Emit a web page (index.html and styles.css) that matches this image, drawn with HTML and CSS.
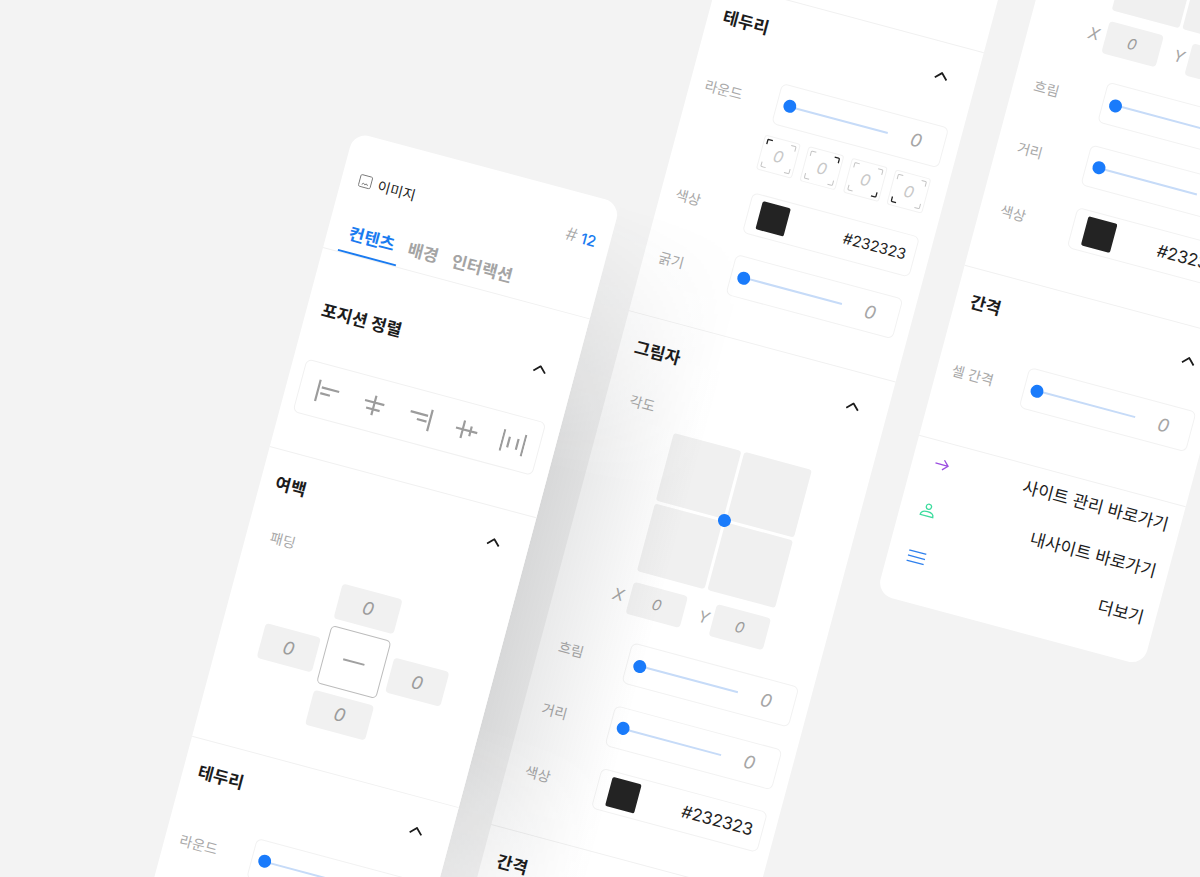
FILE: index.html
```html
<!DOCTYPE html>
<html lang="ko">
<head>
<meta charset="utf-8">
<title>이미지 설정 패널</title>
<link rel="stylesheet" href="styles.css">
</head>
<body>
<main class="stage">

<!-- 첫 번째 패널 -->
<aside class="panel panel-first">
  <header class="panel-head">
    <div class="panel-title-row">
      <div class="widget-name">
        <svg class="icon-image" viewBox="0 0 14 14"><rect x="1" y="1" width="12" height="12" rx="1.5"/><path d="M4 10.5l1.500-1.500 1.500 1.200 1.500-1.200 1.500 1.500"/></svg>
        <span>이미지</span>
      </div>
      <div class="widget-id"><span class="hash">#</span> <span class="num">12</span></div>
    </div>
    <nav class="tabs">
      <span class="tab active">컨텐츠</span>
      <span class="tab">배경</span>
      <span class="tab">인터랙션</span>
    </nav>
  </header>

  <section class="section section-position">
    <div class="section-head"><h2>포지션 정렬</h2><svg class="chevron" viewBox="0 0 14 8"><path d="M1 7l6-6 6 6"/></svg></div>
    <div class="align-box">
      <svg class="align-icon" viewBox="0 0 24 24"><path d="M2 1v22M5 8h18M5 14h10"/></svg>
      <svg class="align-icon" viewBox="0 0 24 24"><path d="M12 2v20M2 9h20M5 16h14"/></svg>
      <svg class="align-icon" viewBox="0 0 24 24"><path d="M22 1v22M1 8h18M9 14h10"/></svg>
      <svg class="align-icon" viewBox="0 0 24 24"><path d="M1 12h22M8 3v18M16 7v10"/></svg>
      <svg class="align-icon" viewBox="0 0 24 24"><path d="M1 1v22M23 1v22M7.500 7v11M16.500 7v11"/></svg>
    </div>
  </section>

  <section class="section section-padding">
    <div class="section-head"><h2>여백</h2><svg class="chevron" viewBox="0 0 14 8"><path d="M1 7l6-6 6 6"/></svg></div>
    <div class="sub-label">패딩</div>
    <div class="padding-grid">
      <div class="pad-cell pad-top">0</div>
      <div class="pad-cell pad-left">0</div>
      <div class="pad-center"><i></i></div>
      <div class="pad-cell pad-right">0</div>
      <div class="pad-cell pad-bottom">0</div>
    </div>
  </section>

  <section class="section section-border">
    <div class="section-head"><h2>테두리</h2><svg class="chevron" viewBox="0 0 14 8"><path d="M1 7l6-6 6 6"/></svg></div>
    <div class="rows">
      <div class="radius-group">
        <div class="row"><span class="label">라운드</span><div class="slider"><div class="track"><i class="knob"></i></div><span class="value">0</span></div></div>
        <div class="corners">
          <div class="corner">0<svg viewBox="0 0 37 36"><path class="on" d="M4 9V5q0-1 1-1h4"/><path d="M28 4h4q1 0 1 1v4M33 27v4q0 1-1 1h-4M9 32H5q-1 0-1-1v-4"/></svg></div>
          <div class="corner">0<svg viewBox="0 0 37 36"><path class="on" d="M28 4h4q1 0 1 1v4"/><path d="M4 9V5q0-1 1-1h4M33 27v4q0 1-1 1h-4M9 32H5q-1 0-1-1v-4"/></svg></div>
          <div class="corner">0<svg viewBox="0 0 37 36"><path class="on" d="M33 27v4q0 1-1 1h-4"/><path d="M4 9V5q0-1 1-1h4M28 4h4q1 0 1 1v4M9 32H5q-1 0-1-1v-4"/></svg></div>
          <div class="corner">0<svg viewBox="0 0 37 36"><path class="on" d="M9 32H5q-1 0-1-1v-4"/><path d="M4 9V5q0-1 1-1h4M28 4h4q1 0 1 1v4M33 27v4q0 1-1 1h-4"/></svg></div>
        </div>
      </div>
      <div class="row"><span class="label">색상</span><div class="color-box"><i class="swatch"></i><span class="hex">#232323</span></div></div>
      <div class="row"><span class="label">굵기</span><div class="slider"><div class="track"><i class="knob"></i></div><span class="value">0</span></div></div>
    </div>
  </section>
</aside>

<!-- 두 번째 패널 -->
<aside class="panel panel-second">
  <section class="section section-padding">
    <div class="section-head"><h2>여백</h2><svg class="chevron" viewBox="0 0 14 8"><path d="M1 7l6-6 6 6"/></svg></div>
    <div class="sub-label">패딩</div>
    <div class="padding-grid">
      <div class="pad-cell pad-top">0</div>
      <div class="pad-cell pad-left">0</div>
      <div class="pad-center"><i></i></div>
      <div class="pad-cell pad-right">0</div>
      <div class="pad-cell pad-bottom">0</div>
    </div>
  </section>

  <section class="section section-border">
    <div class="section-head"><h2>테두리</h2><svg class="chevron" viewBox="0 0 14 8"><path d="M1 7l6-6 6 6"/></svg></div>
    <div class="rows">
      <div class="radius-group">
        <div class="row"><span class="label">라운드</span><div class="slider"><div class="track"><i class="knob"></i></div><span class="value">0</span></div></div>
        <div class="corners">
          <div class="corner">0<svg viewBox="0 0 37 36"><path class="on" d="M4 9V5q0-1 1-1h4"/><path d="M28 4h4q1 0 1 1v4M33 27v4q0 1-1 1h-4M9 32H5q-1 0-1-1v-4"/></svg></div>
          <div class="corner">0<svg viewBox="0 0 37 36"><path class="on" d="M28 4h4q1 0 1 1v4"/><path d="M4 9V5q0-1 1-1h4M33 27v4q0 1-1 1h-4M9 32H5q-1 0-1-1v-4"/></svg></div>
          <div class="corner">0<svg viewBox="0 0 37 36"><path class="on" d="M33 27v4q0 1-1 1h-4"/><path d="M4 9V5q0-1 1-1h4M28 4h4q1 0 1 1v4M9 32H5q-1 0-1-1v-4"/></svg></div>
          <div class="corner">0<svg viewBox="0 0 37 36"><path class="on" d="M9 32H5q-1 0-1-1v-4"/><path d="M4 9V5q0-1 1-1h4M28 4h4q1 0 1 1v4M33 27v4q0 1-1 1h-4"/></svg></div>
        </div>
      </div>
      <div class="row"><span class="label">색상</span><div class="color-box"><i class="swatch"></i><span class="hex">#232323</span></div></div>
      <div class="row"><span class="label">굵기</span><div class="slider"><div class="track"><i class="knob"></i></div><span class="value">0</span></div></div>
    </div>
  </section>

  <section class="section section-shadow">
    <div class="section-head"><h2>그림자</h2><svg class="chevron" viewBox="0 0 14 8"><path d="M1 7l6-6 6 6"/></svg></div>
    <div class="sub-label">각도</div>
    <div class="angle-grid"><i></i><i></i><i></i><i></i><b class="knob"></b></div>
    <div class="xy-row">
      <span class="axis">X</span><div class="xy-cell">0</div>
      <span class="axis axis-y">Y</span><div class="xy-cell">0</div>
    </div>
    <div class="rows">
      <div class="row"><span class="label">흐림</span><div class="slider"><div class="track"><i class="knob"></i></div><span class="value">0</span></div></div>
      <div class="row"><span class="label">거리</span><div class="slider"><div class="track"><i class="knob"></i></div><span class="value">0</span></div></div>
      <div class="row"><span class="label">색상</span><div class="color-box"><i class="swatch"></i><span class="hex">#232323</span></div></div>
    </div>
  </section>

  <section class="section section-gap">
    <div class="section-head"><h2>간격</h2><svg class="chevron" viewBox="0 0 14 8"><path d="M1 7l6-6 6 6"/></svg></div>
    <div class="rows">
      <div class="row"><span class="label">셀 간격</span><div class="slider"><div class="track"><i class="knob"></i></div><span class="value">0</span></div></div>
    </div>
  </section>
</aside>

<!-- 세 번째 패널 -->
<aside class="panel panel-third">
  <section class="section section-shadow">
    <div class="section-head"><h2>그림자</h2><svg class="chevron" viewBox="0 0 14 8"><path d="M1 7l6-6 6 6"/></svg></div>
    <div class="sub-label">각도</div>
    <div class="angle-grid"><i></i><i></i><i></i><i></i><b class="knob"></b></div>
    <div class="xy-row">
      <span class="axis">X</span><div class="xy-cell">0</div>
      <span class="axis axis-y">Y</span><div class="xy-cell">0</div>
    </div>
    <div class="rows">
      <div class="row"><span class="label">흐림</span><div class="slider"><div class="track"><i class="knob"></i></div><span class="value">0</span></div></div>
      <div class="row"><span class="label">거리</span><div class="slider"><div class="track"><i class="knob"></i></div><span class="value">0</span></div></div>
      <div class="row"><span class="label">색상</span><div class="color-box"><i class="swatch"></i><span class="hex">#232323</span></div></div>
    </div>
  </section>

  <section class="section section-gap">
    <div class="section-head"><h2>간격</h2><svg class="chevron" viewBox="0 0 14 8"><path d="M1 7l6-6 6 6"/></svg></div>
    <div class="rows">
      <div class="row"><span class="label">셀 간격</span><div class="slider"><div class="track"><i class="knob"></i></div><span class="value">0</span></div></div>
    </div>
  </section>

  <section class="links">
    <a class="link">
      <svg class="link-icon arrow" viewBox="0 0 16 16"><path d="M1 8h13M9 3l5 5-5 5"/></svg>
      <span>사이트 관리 바로가기</span>
    </a>
    <a class="link">
      <svg class="link-icon person" viewBox="0 0 16 16"><circle cx="8" cy="4" r="2.600"/><path d="M1.500 13.500c0-3 3-4.500 6.500-4.500s6.500 1.500 6.500 4.500z"/></svg>
      <span>내사이트 바로가기</span>
    </a>
    <a class="link">
      <svg class="link-icon menu" viewBox="0 0 18 14"><path d="M0 1.700h18M0 7h18M0 12.300h18"/></svg>
      <span>더보기</span>
    </a>
  </section>
</aside>

</main>
</body>
</html>
```
FILE: styles.css
```css
* { box-sizing: border-box; }

html, body {
  margin: 0;
  height: 100%;
  overflow: hidden;
}

body {
  font-family: Inter, "Noto Sans CJK KR", "Noto Sans", sans-serif;
  color: #1c1c1c;
  background: #f3f3f3;
}

.stage {
  position: relative;
  width: 1200px;
  height: 877px;
  overflow: hidden;
  background: #f3f3f3;
}

/* Panels lie on a free canvas, each tilted by 15deg */
.panel {
  position: absolute;
  width: 276px;
  background: #fff;
  border-radius: 16px;
  transform: rotate(15deg);
  transform-origin: 0 0;
  z-index: 1;
}

.panel-first { left: 354.4px; top: 131.6px; z-index: 2; }
.panel-second { left: 795.3px; top: -309.5px; }
.panel-third { left: 1102.9px; top: -251.4px; }

/* Soft shadow cast by the first panel onto the one behind */
.panel-first::after {
  content: "";
  position: absolute;
  left: 100%;
  top: 0;
  width: 142px;
  height: 830px;
  background: linear-gradient(to right, rgba(35, 40, 45, .13), rgba(35, 40, 45, 0));
  -webkit-mask-image: linear-gradient(to bottom, transparent, #000 33%, #000 65%, transparent);
  mask-image: linear-gradient(to bottom, transparent, #000 33%, #000 65%, transparent);
  pointer-events: none;
}

/* Header */
.panel-head { height: 118.5px; padding-top: 35px; }

.panel-title-row {
  display: flex;
  justify-content: space-between;
  align-items: center;
  height: 20px;
  padding: 0 14px 0 17px;
}

.widget-name {
  display: flex;
  align-items: center;
  gap: 6px;
  font-size: 14px;
}

.icon-image {
  width: 14px;
  height: 14px;
  fill: none;
  stroke: #777;
  stroke-width: .9;
}

.widget-id {
  padding-bottom: 5px;
  font-size: 15px;
}

.widget-id .hash {
  color: #a8a8a8;
  font-size: 18px;
  font-weight: 300;
  font-style: italic;
}

.widget-id .num { color: #1a7bf0; font-weight: 500; }

.tabs {
  display: flex;
  margin: 33px 0 0 14.5px;
}

.tab {
  height: 31px;
  padding: 0 7px;
  font-size: 17px;
  line-height: 22px;
  font-weight: 700;
  color: #a4a4a4;
  border-bottom: 2px solid transparent;
}

.tab.active {
  color: #1a7bf0;
  border-bottom-color: #1a7bf0;
}

/* Sections */
.section {
  border-top: 1px solid #f1f1f1;
  padding: 21.5px 16px 40px 14px;
}

.section-head {
  display: flex;
  justify-content: space-between;
  align-items: center;
  height: 24px;
  padding-right: 12px;
}

.section-head h2 {
  margin: 0 0 0 1px;
  padding-bottom: 5px;
  font-size: 17px;
  font-weight: 700;
  color: #1c1c1c;
}

.chevron {
  width: 14px;
  height: 8px;
  fill: none;
  stroke: #1c1c1c;
  stroke-width: 1.8;
}

.sub-label {
  height: 18px;
  margin-left: 10px;
  font-size: 14px;
  line-height: 18px;
  color: #a8a8a8;
}

/* Position */
.section-position { padding: 49px 16px 39px 14px; }

.align-box {
  display: flex;
  justify-content: space-around;
  align-items: center;
  height: 55px;
  margin: 38.5px -1px 0;
  padding: 0 2.5px 0 4.5px;
  border: 1px solid #f1f1f1;
  border-radius: 6px;
}

.align-icon {
  width: 24px;
  height: 24px;
  fill: none;
  stroke: #9c9c9c;
  stroke-width: 2.2;
}

/* Padding */
.section-padding .sub-label { margin-top: 32px; }

.padding-grid {
  display: grid;
  grid-template-columns: 57px 62px 57px;
  grid-template-rows: 36px 60px 36px;
  gap: 7px;
  justify-content: center;
  margin-top: 17px;
}

.pad-cell,
.xy-cell {
  display: flex;
  justify-content: center;
  align-items: center;
  background: #f1f1f1;
  border-radius: 4px;
  font-style: italic;
  color: #9c9c9c;
}

.pad-cell { font-size: 18px; }
.pad-top { grid-area: 1 / 2; }
.pad-left { grid-area: 2 / 1; height: 36px; align-self: center; margin-top: 7px; }
.pad-right { grid-area: 2 / 3; height: 36px; align-self: center; margin-top: 7px; }
.pad-bottom { grid-area: 3 / 2; }

.pad-center {
  grid-area: 2 / 2;
  display: flex;
  justify-content: center;
  align-items: center;
  border: 1px solid #bcbcbc;
  border-radius: 5px;
}

.pad-center i {
  display: block;
  width: 22px;
  height: 2px;
  background: #a0a0a0;
}

/* Rows */
.rows {
  display: flex;
  flex-direction: column;
  gap: 22.5px;
  margin-top: 35.5px;
}

.radius-group {
  display: flex;
  flex-direction: column;
  gap: 12.5px;
}

.row {
  display: flex;
  align-items: center;
}

.label {
  width: 75px;
  flex: none;
  padding-left: 1px;
  padding-top: 1px;
  font-size: 14px;
  color: #a8a8a8;
}

.slider {
  display: flex;
  justify-content: space-between;
  align-items: center;
  flex: none;
  width: 173px;
  height: 42px;
  padding: 0 22px 0 12.5px;
  border: 1px solid #f2f2f2;
  border-radius: 6px;
}

.track {
  position: relative;
  width: 101.5px;
  height: 2px;
  background: #c6dbf8;
}

.knob {
  display: block;
  width: 13px;
  height: 13px;
  border-radius: 50%;
  background: #1a7bfb;
}

.track .knob {
  position: absolute;
  left: -6.5px;
  top: -5.5px;
}

.value {
  font-size: 18px;
  font-style: italic;
  color: #a6a6a6;
}

.corners {
  display: flex;
  gap: 8px;
  margin-left: 72px;
}

.corner {
  position: relative;
  display: flex;
  flex: none;
  justify-content: center;
  align-items: center;
  width: 37px;
  height: 36px;
  border: 1px solid #f2f2f2;
  border-radius: 3px;
  font-size: 16px;
  font-style: italic;
  color: #c8c8c8;
}

.corner svg {
  position: absolute;
  inset: -1px;
  width: 37px;
  height: 36px;
  fill: none;
  stroke: #c4c4c4;
  stroke-width: 1;
}

.corner svg .on { stroke: #232323; stroke-width: 1.3; }

.color-box {
  display: flex;
  justify-content: space-between;
  align-items: center;
  flex: none;
  width: 173px;
  height: 42px;
  padding: 0 8px 0 10.5px;
  border: 1px solid #f2f2f2;
  border-radius: 6px;
}

.swatch {
  display: block;
  width: 29px;
  height: 29px;
  border-radius: 2px;
  background: #232323;
}

.hex {
  font-size: 15px;
  color: #232323;
}

/* Shadow */
.section-shadow .sub-label { margin-top: 31.5px; }
.section-shadow { padding-bottom: 41px; }
.section-shadow .label { padding-left: 5px; }

.panel-third .section-shadow { padding-bottom: 43px; padding-left: 15.5px; }
.panel-third .section-gap .section-head,
.panel-third .section-gap .rows { position: relative; }

.angle-grid {
  position: relative;
  display: grid;
  grid-template-columns: 70px 70px;
  grid-template-rows: 70px 70px;
  gap: 3px;
  width: 143px;
  margin: 11px 0 0 60.5px;
}

.angle-grid i {
  display: block;
  background: #f0f0f0;
  border-radius: 3px;
}

.angle-grid .knob {
  position: absolute;
  left: 65px;
  top: 65px;
}

.xy-row {
  display: flex;
  align-items: center;
  margin: 10.5px 0 0 44px;
}

.axis {
  width: 17px;
  font-size: 16px;
  font-style: italic;
  color: #a6a6a6;
}

.axis-y { width: 15px; margin-left: 15px; }

.xy-cell {
  width: 56px;
  height: 33px;
  font-size: 15px;
}

.section-shadow .rows { margin-top: 26.5px; }
.section-shadow .color-box { width: 172px; margin-left: 3px; padding: 0 9px 0 12px; }
.section-shadow .swatch { width: 30px; height: 30px; }
.section-shadow .hex { font-size: 17px; }

/* Gap */
.section-gap { padding-bottom: 52px; }

/* Links */
.links {
  display: flex;
  flex-direction: column;
  gap: 4px;
  padding: 0 12px 24px 20px;
  border-top: 1px solid #f1f1f1;
}

.link {
  display: flex;
  justify-content: space-between;
  align-items: center;
  height: 44px;
  font-size: 17px;
  color: #1c1c1c;
}

.link span { padding-bottom: 4px; }

.link-icon {
  width: 16px;
  height: 16px;
  fill: none;
  stroke-width: 1.3;
}

.arrow { stroke: #9b4de0; margin-left: 1.5px; }
.person { stroke: #3ddc9e; }
.menu { width: 18px; height: 14px; stroke: #2f80ed; }
```
